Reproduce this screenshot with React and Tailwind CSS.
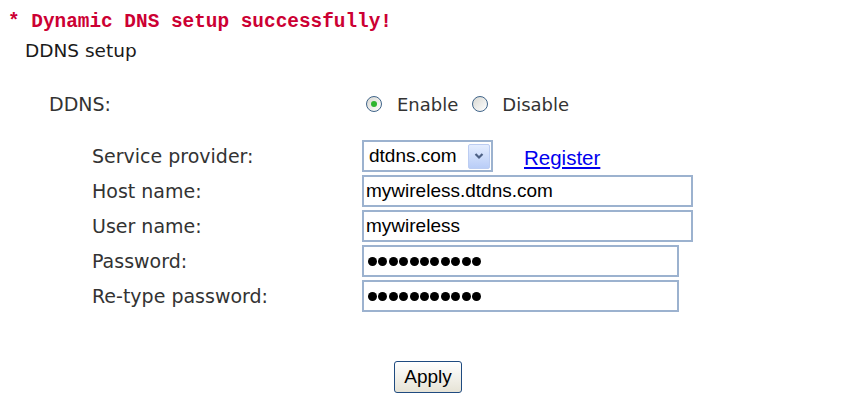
const LABEL = "font-['DejaVu_Sans',Verdana,sans-serif] text-[19px] text-[#333]"
const OPTION = "font-['DejaVu_Sans',Verdana,sans-serif] text-[18px] text-[#333]"
const FIELD = "font-['Liberation_Sans',Arial,sans-serif] text-[19px] text-black"

function Radio({ checked }) {
  return (
    <span className="flex h-[16px] w-[16px] items-center justify-center rounded-full border border-[#3f6489] bg-gradient-to-br from-[#d8d8d2] to-white">
      {checked && <span className="h-[6px] w-[6px] rounded-full bg-[#2fb52f]" />}
    </span>
  )
}

function Dots({ n }) {
  return (
    <span className="flex gap-[1.4px]">
      {Array.from({ length: n }).map((_, i) => (
        <span key={i} className="h-[9px] w-[9px] rounded-full bg-black" />
      ))}
    </span>
  )
}

function Box({ width, children }) {
  return (
    <div
      className={`flex h-[32px] items-center border-2 border-[#9cb2cf] bg-white pl-[2px] ${FIELD} ${width}`}
    >
      {children}
    </div>
  )
}

export default function App() {
  return (
    <div className="h-[408px] w-[864px] bg-white pl-[8px] pt-[11px]">
      <p className="font-['Liberation_Mono','Courier_New',monospace] text-[19.4px] font-bold leading-[22px] text-[#cc0033]">
        * Dynamic DNS setup successfully!
      </p>
      <p className="mt-[7px] pl-[17px] font-['DejaVu_Sans',Verdana,sans-serif] text-[18.5px] leading-[22px] text-[#1a1a1a]">
        DDNS setup
      </p>

      {/* DDNS on/off */}
      <div className="mt-[31px] flex h-[22px] items-center pl-[41px]">
        <span className={`w-[317px] ${LABEL}`}>DDNS:</span>
        <Radio checked />
        <span className={`ml-[15px] ${OPTION}`}>Enable</span>
        <span className="ml-[14px]"><Radio /></span>
        <span className={`ml-[14px] ${OPTION}`}>Disable</span>
      </div>

      {/* fields */}
      <div className="mt-[25px] grid grid-cols-[270px_auto] items-center gap-y-[3px] pl-[84px]">
        <span className={LABEL}>Service provider:</span>
        <div className="flex items-end">
          <div className={`flex h-[32px] w-[131px] items-center justify-between border-2 border-[#9cb2cf] bg-white pl-[5px] pr-[1px] ${FIELD}`}>
            <span>dtdns.com</span>
            <span className="flex h-[25px] w-[22px] items-center justify-center rounded-[2px] border border-[#bccdf2] bg-gradient-to-b from-[#e4edff] to-[#b9cdf7]">
              <svg width="10" height="8" viewBox="0 0 10 8">
                <path d="M1.5 2 L5 5.5 L8.5 2" fill="none" stroke="#4d6185" strokeWidth="2.2" />
              </svg>
            </span>
          </div>
          <a href="#" className="mb-[3px] ml-[31px] font-['Liberation_Sans',Arial,sans-serif] text-[20.5px] leading-[22px] text-[#0000ee] underline">
            Register
          </a>
        </div>

        <span className={LABEL}>Host name:</span>
        <Box width="w-[331px]">mywireless.dtdns.com</Box>

        <span className={LABEL}>User name:</span>
        <Box width="w-[331px]">mywireless</Box>

        <span className={LABEL}>Password:</span>
        <Box width="w-[317px]"><span className="pl-[2px]"><Dots n={11} /></span></Box>

        <span className={LABEL}>Re-type password:</span>
        <Box width="w-[317px]"><span className="pl-[2px]"><Dots n={11} /></span></Box>
      </div>

      <div className="mt-[49px] flex justify-center pr-[16px]">
        <button className="h-[32px] w-[68px] rounded-[3px] border border-[#1f4b80] bg-gradient-to-b from-white to-[#e6e3d6] font-['Liberation_Sans',Arial,sans-serif] text-[19px] text-black">
          Apply
        </button>
      </div>
    </div>
  )
}
